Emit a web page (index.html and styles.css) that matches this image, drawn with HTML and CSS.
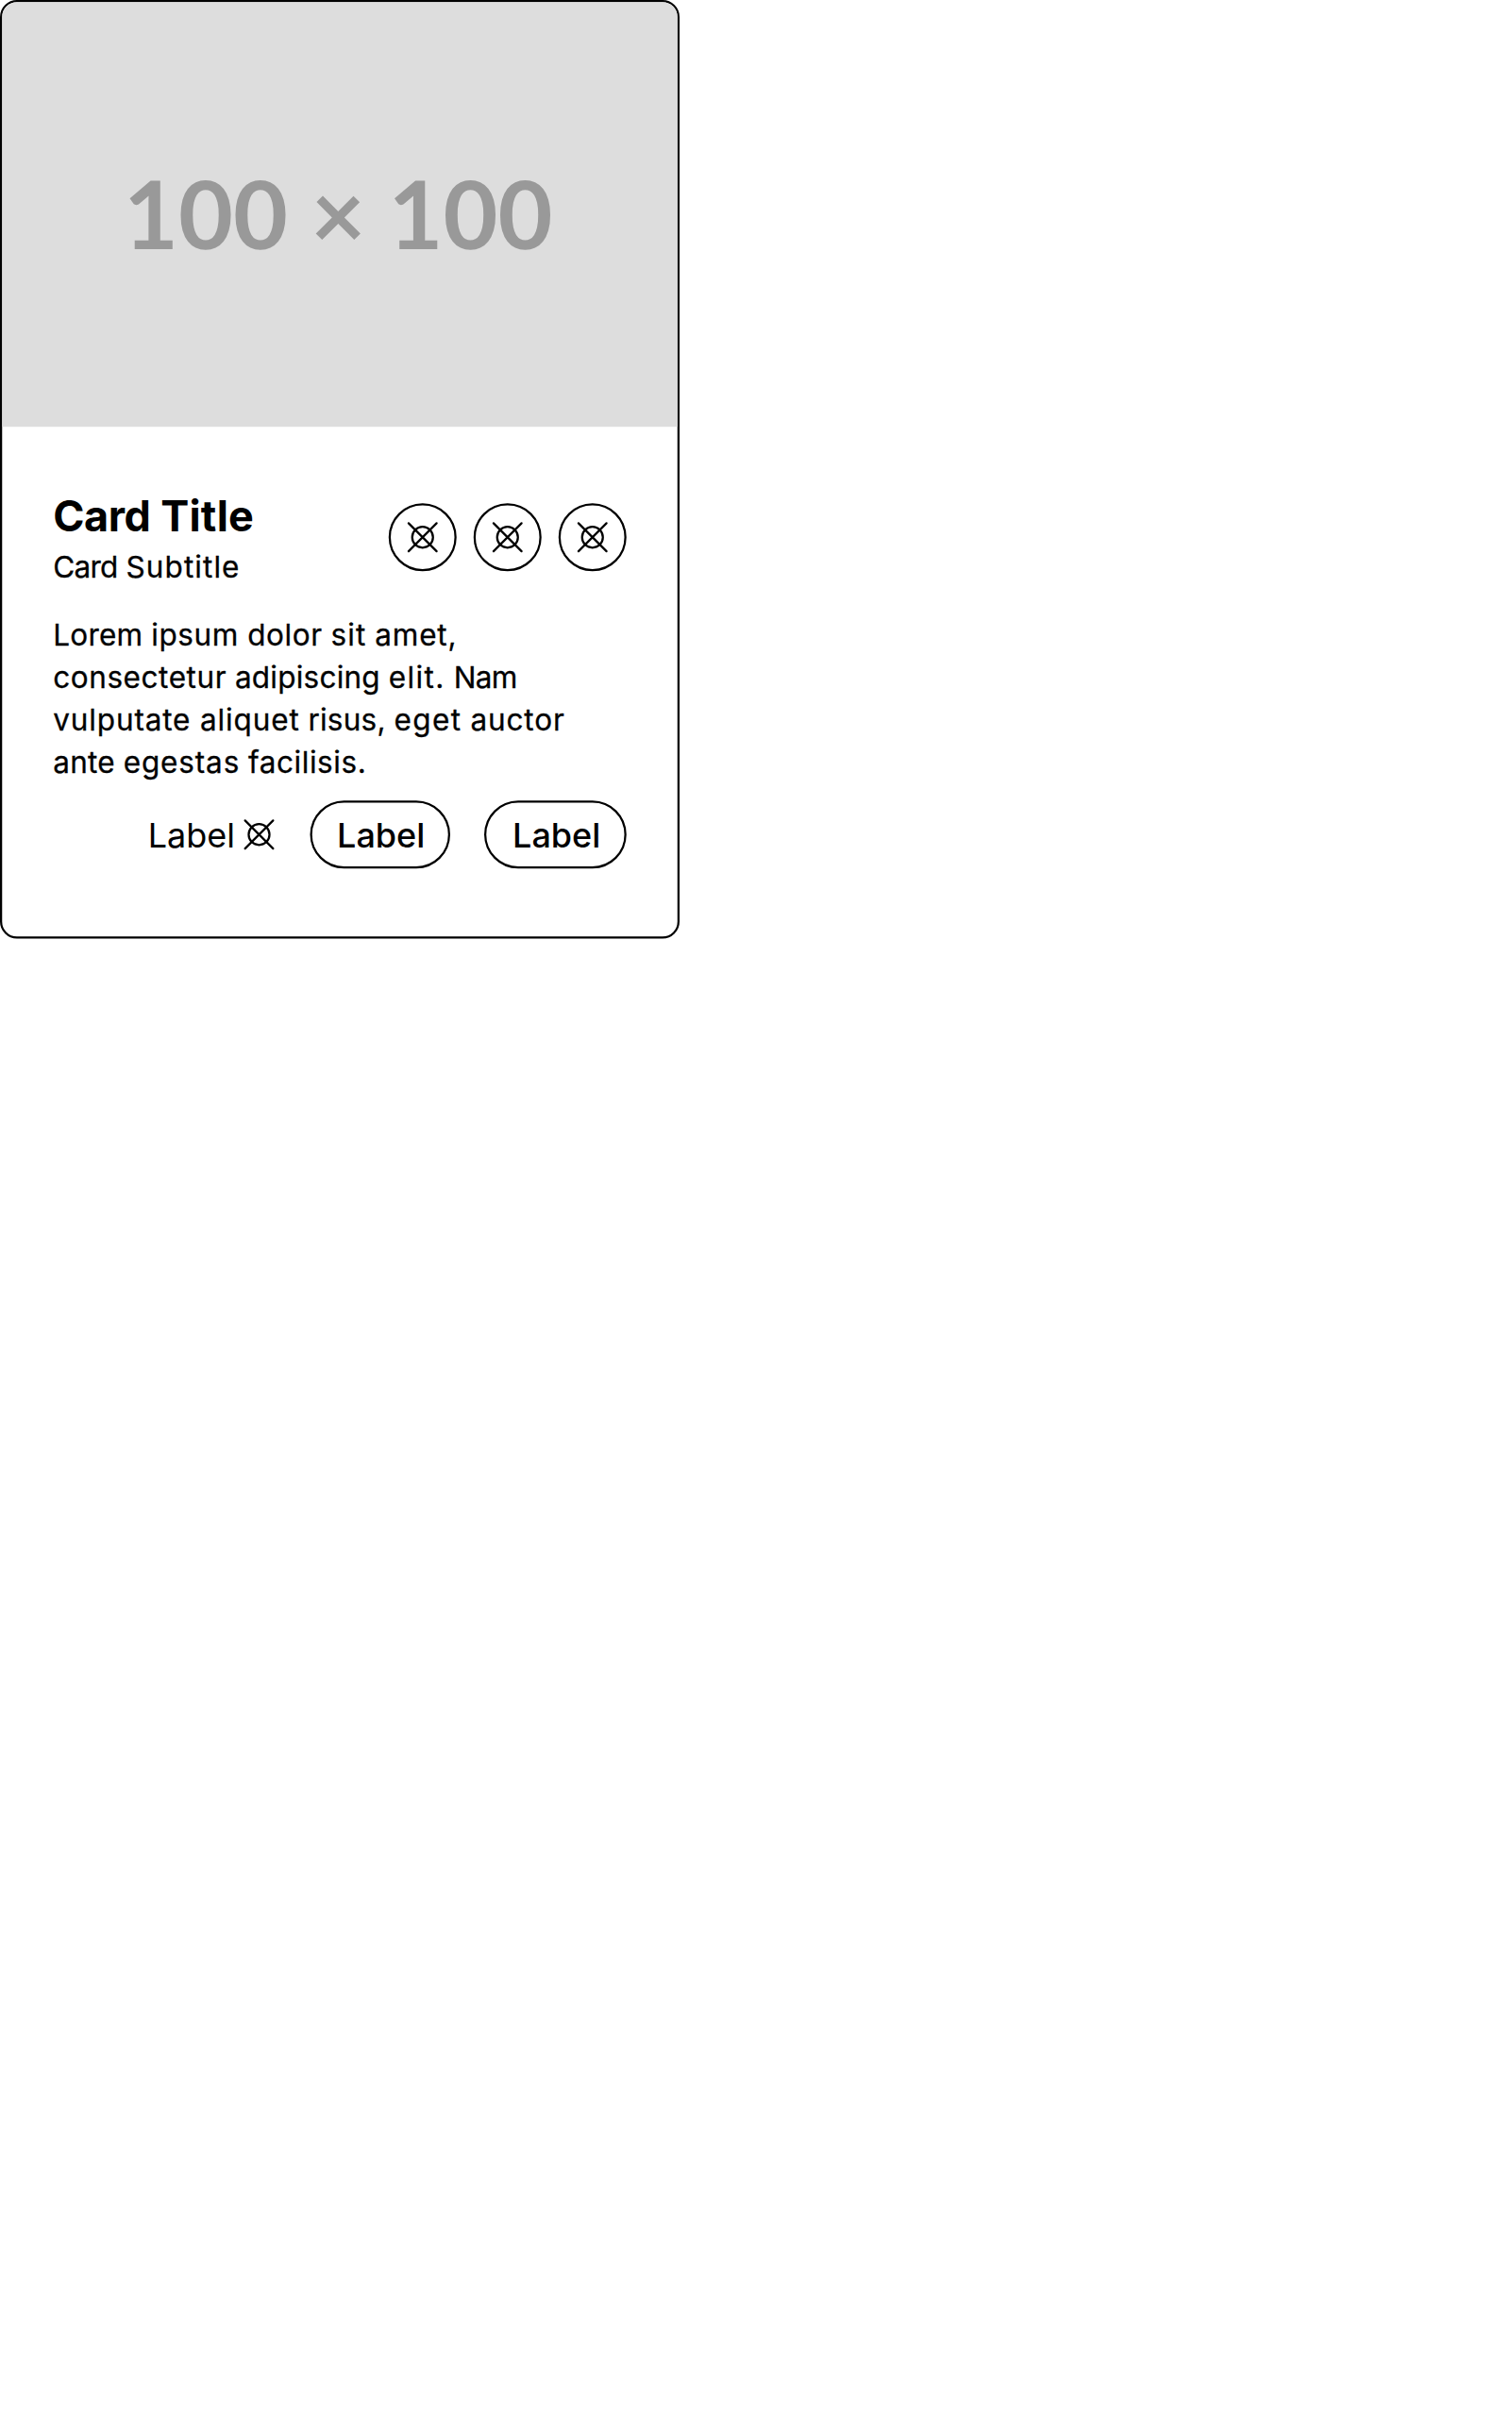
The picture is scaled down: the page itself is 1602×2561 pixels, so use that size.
FILE: index.html
```html
<!DOCTYPE html>
<html lang="en">
<head>
<meta charset="utf-8">
<title>Card</title>
<link rel="stylesheet" href="styles.css">
</head>
<body>
<svg width="0" height="0" class="defs"><symbol id="mark" viewBox="0 0 16 16"><g fill="none" stroke="#000" stroke-width="1" stroke-linecap="round"><circle cx="8" cy="8" r="4.9"/><path d="M1.4 1.4l13.2 13.2M14.6 1.4L1.4 14.6"/></g></symbol></svg>
<article class="card">
  <svg class="media" viewBox="0 0 715.5 450"><text class="media-text" x="356" y="261.3">100 × 100</text></svg>
  <div class="content">
    <header class="header">
      <div class="titles">
        <h2 class="title"><span class="snug">Card</span> <span class="ls-1">Title</span></h2>
        <p class="subtitle"><span class="tight">Card</span> <span class="ls-4">Subtitle</span></p>
      </div>
      <div class="icons">
        <button class="round" aria-label="Action"><svg class="icon"><use href="#mark"/></svg></button>
        <button class="round" aria-label="Action"><svg class="icon"><use href="#mark"/></svg></button>
        <button class="round" aria-label="Action"><svg class="icon"><use href="#mark"/></svg></button>
      </div>
    </header>
    <p class="text">
      <span class="line"><span class="ls-1">Lorem</span> <span class="ls-2">ipsum dolor</span> <span class="ls-4">sit</span> <span class="ls-3">amet,</span></span>
      <span class="line"><span class="ls-2">consectetur</span> <span class="ls-1">adipiscing</span> <span class="ls-5">elit.</span> <span class="tight">Nam</span></span>
      <span class="line"><span class="ls-3">vulputate aliquet</span> <span class="ls-1">risus,</span> <span class="ls-5">eget</span> <span class="ls-3">auctor</span></span>
      <span class="line"><span class="ls-1">ante</span> <span class="ls-3">egestas</span> <span class="ls-2">facilisis.</span></span>
    </p>
    <footer class="actions">
      <a class="link">Label<svg class="icon"><use href="#mark"/></svg></a>
      <button class="pill">Label</button>
      <button class="pill">Label</button>
    </footer>
  </div>
</article>
</body>
</html>
```
FILE: styles.css
```css
* { box-sizing: border-box; }
body { margin: 0; min-height: 2561px; background: #fff; color: #000; font-family: Inter, sans-serif; }
h2, p { margin: 0; }
.defs { display: none; }
.card {
  width: 320px;
  height: 442px;
  border: 1px solid #000;
  border-radius: 8px;
  overflow: hidden;
  transform: scale(2.25);
  transform-origin: 0 0;
}
.media {
  display: block;
  width: 318px;
  height: 200px;
  background: #ddd;
}
.media-text {
  fill: #999;
  font: bold 100px Lato, sans-serif;
  text-anchor: middle;
  text-rendering: geometricPrecision;
}
.content { padding: 28px 24px 0; }
.header { display: flex; justify-content: space-between; align-items: center; height: 48px; }
.title { font-size: 20px; line-height: 28px; font-weight: 700; }
.subtitle, .text { font-size: 14px; line-height: 20px; -webkit-text-stroke: 0.12px #000; }
.icons { display: flex; gap: 8px; }
.round {
  width: 32px;
  height: 32px;
  padding: 0;
  border: 1px solid #000;
  border-radius: 50%;
  background: none;
  display: flex;
  align-items: center;
  justify-content: center;
}
.icon { width: 16px; height: 16px; flex: none; }
.text { margin-top: 12px; }
.line { display: block; white-space: nowrap; }
.tight { letter-spacing: -0.32px; }
.snug { letter-spacing: -0.2px; }
.ls-1 { letter-spacing: 0.1px; }
.ls-2 { letter-spacing: 0.25px; }
.ls-3 { letter-spacing: 0.38px; }
.ls-4 { letter-spacing: 0.48px; }
.ls-5 { letter-spacing: 0.62px; }
.actions { margin-top: 8px; display: flex; justify-content: flex-end; align-items: center; gap: 16px; }
.link { display: flex; align-items: center; gap: 3px; font-size: 16px; line-height: 24px; }
.pill {
  width: 66.67px;
  height: 32px;
  padding: 0 0 0 0.8px;
  border: 1px solid #000;
  border-radius: 16px;
  background: none;
  color: #000;
  font: 500 16px/24px Inter, sans-serif;
}
```
